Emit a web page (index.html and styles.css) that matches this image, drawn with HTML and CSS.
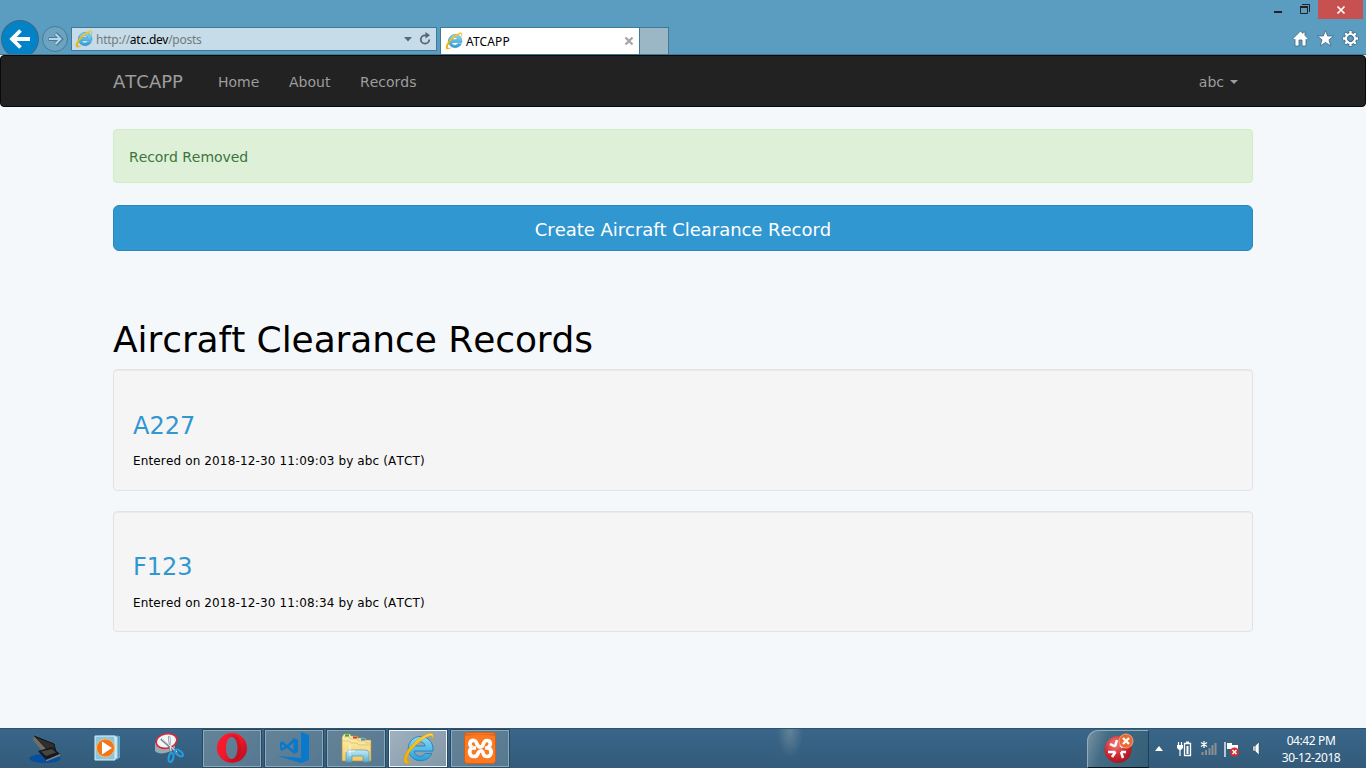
FILE: index.html
```html
<!DOCTYPE html>
<html lang="en">
<head>
<meta charset="utf-8">
<title>ATCAPP</title>
<link rel="stylesheet" href="styles.css">
</head>
<body>
<svg class="defs" width="0" height="0" aria-hidden="true">
  <defs>
    <linearGradient id="ieBlue" x1="0" y1="0" x2="0" y2="1"><stop offset="0" stop-color="#8adcf8"/><stop offset="1" stop-color="#279fda"/></linearGradient>
    <linearGradient id="ieGold" x1="0" y1="0" x2="1" y2="0"><stop offset="0" stop-color="#f3b300"/><stop offset="1" stop-color="#ffdb48"/></linearGradient>
    <radialGradient id="redBall" cx=".4" cy=".3" r=".7"><stop offset="0" stop-color="#f08080"/><stop offset=".6" stop-color="#cf2b32"/><stop offset="1" stop-color="#a81820"/></radialGradient>
    <linearGradient id="operaRed" x1="0" y1="0" x2="1" y2="1"><stop offset="0" stop-color="#ff1b2d"/><stop offset=".5" stop-color="#f0182a"/><stop offset="1" stop-color="#b00c1c"/></linearGradient>
    <linearGradient id="folder" x1="0" y1="0" x2="0" y2="1"><stop offset="0" stop-color="#fff3b8"/><stop offset="1" stop-color="#eecb66"/></linearGradient>
    <linearGradient id="glass" x1="0" y1="0" x2="0" y2="1"><stop offset="0" stop-color="#c4ecf8"/><stop offset="1" stop-color="#58add3"/></linearGradient>
    <symbol id="ie" viewBox="0 0 32 32">
      <path d="M29 20.800A12 11.800 0 1 1 30 15.500V18.500H11.800C12.400 24 19.800 25.400 22.400 20.800ZM11.900 13.600H22.400C21.800 8.400 13 7.800 11.900 13.600Z" fill="url(#ieBlue)" stroke="#2483b9" stroke-width=".9"/>
      <path d="M22.800 5.600C28 2.800 29.400 3.200 29.400 5.600C29.600 7 29 8.400 28.600 9.400C32.200 1.800 29.800-.2 24.400 2C15 5.400 4.600 16 2.200 24.600C.4 31.400 4.600 32 10.400 28.200C6 30 4 28.800 5.200 24.400C7.200 17.800 15.600 9.800 22.800 5.600Z" fill="url(#ieGold)" stroke="#d69a05" stroke-width=".5"/>
    </symbol>
  </defs>
</svg>
<div class="screen">
  <header class="browser">
    <div class="titlebar">
      <span class="win-min"></span>
      <svg class="win-restore" width="12" height="12" viewBox="0 0 12 12"><path d="M3 1.500H10.500V9" fill="none" stroke="#222"/><path d="M1.500 4V10.500H8.500V4" fill="none" stroke="#222"/><path d="M1 4H9" stroke="#222" stroke-width="2"/></svg>
      <span class="win-close"><svg width="10" height="10" viewBox="0 0 10 10"><path d="M1.500 1.500L8.500 8.500M8.500 1.500L1.500 8.500" stroke="#fff" stroke-width="1.700"/></svg></span>
    </div>
    <div class="toolbar">
      <svg class="back" width="40" height="35" viewBox="0 0 40 35"><circle cx="20" cy="20" r="18.400" fill="#0283c8" stroke="#386b89" stroke-width="1.200"/><path d="M30 20H12M20.500 11.500L12 20L20.500 28.500" fill="none" stroke="#fff" stroke-width="3.800"/></svg>
      <svg class="forward" width="28" height="28" viewBox="0 0 28 28"><circle cx="14" cy="14" r="12.500" fill="#6ca3c1" stroke="#437b9b"/><path d="M7.500 14H20M14.500 8.500L20 14L14.500 19.500" fill="none" stroke="#427b9c" stroke-width="4"/><path d="M8 14H19M14.500 9L19.500 14L14.500 19" fill="none" stroke="#b9d5e4" stroke-width="2"/></svg>
      <div class="address">
        <svg width="18" height="18"><use href="#ie"/></svg>
        <span class="url">http://<b>atc.dev</b>/posts</span>
        <svg class="drop" width="8" height="5" viewBox="0 0 8 5"><path d="M0 0H8L4 4.500Z" fill="#526e7d"/></svg>
        <svg width="12" height="14" viewBox="0 0 12 14"><path d="M7.500 3.300H6A4.200 4.200 0 1 0 10.200 7.500" fill="none" stroke="#59656c" stroke-width="1.800"/><path d="M6.500 0L11 3.300L6.500 6.500Z" fill="#59656c"/></svg>
      </div>
      <div class="tab"><svg width="18" height="18"><use href="#ie"/></svg><span>ATCAPP</span><svg class="tab-x" width="10" height="10" viewBox="0 0 10 10"><path d="M1.500 1.500L8.500 8.500M8.500 1.500L1.500 8.500" stroke="#a5a5a5" stroke-width="2.300"/></svg></div>
      <div class="newtab"></div>
      <div class="tools">
        <svg width="17" height="17" viewBox="0 0 17 17"><path d="M1 8.500L8.500 1L11 3.400V2H13V5.400L16 8.500L14.500 10L14 9.500V16H10V10H7V16H3V9.500L2.500 10Z" fill="#fff" stroke="#3c6680" stroke-width=".8"/></svg>
        <svg width="17" height="17" viewBox="0 0 17 17"><path d="M8.500 .5L10.700 6H16.700L12 9.800L13.800 16L8.500 12.400L3.200 16L5 9.800L.3 6H6.300Z" fill="#fff" stroke="#3c6680" stroke-width=".8"/></svg>
        <svg width="17" height="17" viewBox="0 0 17 17"><g fill="none"><path d="M8.500 .5V16.500M.5 8.500H16.500M2.800 2.800L14.200 14.200M14.200 2.800L2.800 14.200" stroke="#3c6680" stroke-width="3.600"/><circle cx="8.500" cy="8.500" r="4.600" stroke="#3c6680" stroke-width="3.600"/><path d="M8.500 1V5M8.500 12V16M1 8.500H5M12 8.500H16M3.200 3.200L6 6M11 11L13.800 13.800M13.800 3.200L11 6M6 11L3.200 13.800" stroke="#fff" stroke-width="2.300"/><circle cx="8.500" cy="8.500" r="4.500" stroke="#fff" stroke-width="2.200"/></g><circle cx="8.500" cy="8.500" r="2.800" fill="#5b9dc0" stroke="#3c6680" stroke-width=".6"/></svg>
      </div>
    </div>
  </header>

  <nav class="navbar">
    <a class="brand">ATCAPP</a>
    <a class="nav-link home">Home</a><a class="nav-link about">About</a><a class="nav-link records">Records</a>
    <a class="user">abc<i class="caret"></i></a>
  </nav>
  <main class="container">
    <div class="alert"><span>Record Removed</span></div>
    <a class="create"><span>Create Aircraft Clearance Record</span></a>
    <h1>Aircraft Clearance Records</h1>
    <section class="well"><h3>A227</h3><small>Entered on 2018-12-30 11:09:03 by abc (ATCT)</small></section>
    <section class="well second"><h3>F123</h3><small>Entered on 2018-12-30 11:08:34 by abc (ATCT)</small></section>
  </main>

  <footer class="taskbar">
    <div class="launchers">
      <svg width="32" height="32" viewBox="0 0 32 32"><ellipse cx="16" cy="26.500" rx="15.500" ry="4.500" fill="#074f9d"/><path d="M5 4L25 12L27 20L17 17Z" fill="#302f2e" stroke="#101214"/><path d="M5 4L17 17L14 20L4 8Z" fill="#746e67"/><path d="M9 19L23 15L31 22L17 28Z" fill="#171a1d"/><path d="M12 19.500L23 17L27 20.500L17 24Z" fill="#484642"/><path d="M17 28L31 22V24L17 29.500Z" fill="#7b8082"/></svg>
      <svg width="32" height="32" viewBox="0 0 32 32"><path d="M11 4H29V26H11Z" fill="#62a7c9"/><path d="M8 4H27V27H8Z" fill="#c2e4f1" stroke="#4f95b7"/><path d="M4 4H24V28H4Z" fill="#8bc5df" stroke="#d9f1f8"/><circle cx="14.500" cy="16" r="9" fill="#ee771c" stroke="#ffbb62"/><path d="M11 9.500L21 16L11 22.500Z" fill="#fff"/></svg>
      <svg width="32" height="32" viewBox="0 0 32 32"><path d="M2 11V19C5 23 16 22 22 16V10Z" fill="#98a9b3"/><ellipse cx="13.500" cy="9" rx="10.500" ry="7.200" transform="rotate(-12 13.500 9)" fill="#f3f6f8" stroke="#dc2834" stroke-width="1.600"/><path d="M8 7L25 22M16 4L18 22" stroke="#77838b" stroke-width="2.200"/><path d="M9 7L24 20M16 4L18 19" stroke="#eaf0f3"/><g fill="none" stroke="#249ee2" stroke-width="2"><ellipse cx="18" cy="25.500" rx="2.300" ry="4.500" transform="rotate(12 18 25.500)"/><ellipse cx="26" cy="21" rx="2.300" ry="4.500" transform="rotate(-55 26 21)"/></g></svg>
    </div>
    <div class="tasks">
      <div class="task"><svg width="32" height="32" viewBox="0 0 32 32"><path fill-rule="evenodd" d="M16 1A15 15 0 1 0 16 31A15 15 0 1 0 16 1ZM16 5C20 5 21.500 10 21.500 16S20 27 16 27S10 22 10 16S12 5 16 5Z" fill="url(#operaRed)"/><path d="M11 5C18 0 25 4 25 16S18 32 11 27C18 30 21.500 22 21.500 16S18 2 11 5Z" fill="#a70b18" opacity=".35"/></svg></div>
      <div class="task"><svg width="34" height="34" viewBox="0 0 34 34"><path d="M24 1L32 4V29L24 32L1 25L24 27Z" fill="#0879cb"/><path fill-rule="evenodd" d="M17 7L21 9V21L17 23L10 17L5 20L3 18V12L5 10L10 14ZM16.500 11.500L12 15.500L16.500 19.500ZM5 13V17.500L7.500 15.300Z" fill="#0879cb"/></svg></div>
      <div class="task"><svg width="34" height="34" viewBox="0 0 34 34"><path d="M3 6L5 3H11L12 5H18L19 7H26L27 9H32V30H3Z" fill="url(#folder)" stroke="#b59139" stroke-width=".7"/><path d="M5 6H11V8H19V10H27V12H31M3 10H10L12 12H18L20 14H32" fill="none" stroke="#d5b963" stroke-width=".7"/><path d="M6 4.500H10" stroke="#17b53a" stroke-width="2"/><path d="M14 6.500H18" stroke="#d63d28" stroke-width="2"/><path d="M22 8.500H26" stroke="#2895dc" stroke-width="2"/><path d="M7 31V22Q7 19 11 19H26Q30 19 30 22V31H24V25H13V31Z" fill="url(#glass)" stroke="#6197ad" stroke-width=".7"/><path d="M11 14V25M6 20H16" stroke="#fff" stroke-width=".7"/></svg></div>
      <div class="task active"><svg width="33" height="33"><use href="#ie"/></svg></div>
      <div class="task"><svg width="34" height="34" viewBox="0 0 34 34"><rect x="1.500" y="1.500" width="31" height="31" rx="3" fill="#fa7922" stroke="#d35e16"/><path d="M2 5Q17 2 32 5V3H2Z" fill="#c65d24" opacity=".6"/><path d="M13 17H10M9.500 16.500C5 14 7 9 11 9.500C15 10 12.500 16 17.500 16C21.500 16 19 9.500 24 9.500C28 9.500 28.500 14 25 16.500C30 19 28.500 25.500 24 25.500C18.500 25.500 21.500 19.500 17.500 20C13.500 20.500 16.500 25.500 11 25.500C6 25.500 5 19 9.500 16.500M25 17H22" fill="none" stroke="#fff" stroke-width="3.700"/></svg></div>
    </div>
    <div class="tray-app"><svg width="32" height="32" viewBox="0 0 32 32"><circle cx="15" cy="17.500" r="13.500" fill="url(#redBall)"/><path d="M7 12L12 14.500M14 8L12 14.500M18 15L23 13M18 20L23 20M18 20L20 26M12.500 20L9 25M12.500 20L5 20M18 15V10" fill="none" stroke="#fff" stroke-width="2.500"/><circle cx="23" cy="9" r="7" fill="#e96a31" stroke="#f5a07e"/><path d="M20 6L26 12M26 6L20 12" stroke="#fff" stroke-width="2.300"/></svg></div>
    <div class="tray">
      <svg width="8" height="5" viewBox="0 0 8 5"><path d="M0 5L4 0L8 5Z" fill="#fff"/></svg>
      <svg class="battery" width="17" height="18" viewBox="0 0 17 18"><path d="M2.500 2V5M5.500 2V5M4 9V16" fill="none" stroke="#fff" stroke-width="1.200"/><path d="M1 5H7V8L5 10H3L1 8Z" fill="#fff"/><path d="M8.500 3.500H14.500V15.500H8.500Z" fill="none" stroke="#fff" stroke-width="1.300"/><path d="M10.500 6H12.500V14H10.500ZM10 1.500H13V3H10Z" fill="#fff"/></svg>
      <svg class="signal" width="17" height="17" viewBox="0 0 17 17"><path d="M4 1V8M1 2.500L7 6.500M7 2.500L1 6.500" stroke="#fff" stroke-width="1.200"/><path d="M2.500 12V15M6 10V15M9.500 8V15M12.500 5V15M15.500 3V15" stroke="#8c9090" stroke-width="2"/></svg>
      <svg class="flag" width="18" height="18" viewBox="0 0 18 18"><path d="M2 2V17" stroke="#fff" stroke-width="1.300"/><path d="M4 3H9V5H15V11H9V9H4Z" fill="#fff"/><circle cx="11.500" cy="12" r="4.500" fill="#d52f2d"/><path d="M9.500 10L13.500 14M13.500 10L9.500 14" stroke="#fff" stroke-width="1.500"/></svg>
      <svg class="speaker" width="8" height="15" viewBox="0 0 8 15"><path d="M1 5H3L7 1V14L3 10H1Z" fill="#fff" stroke="#2b4050" stroke-width=".5"/><path d="M3 5V10" stroke="#6d8797"/></svg>
    </div>
    <div class="clock"><span>04:42 PM</span><span>30-12-2018</span></div>
  </footer>
</div>
</body>
</html>
```
FILE: styles.css
```css
* { box-sizing: border-box; }
body { margin: 0; font-family: "DejaVu Sans", sans-serif; font-kerning: none; color: #000; background: #f5f8fa; }
.defs { position: absolute; }
.screen { width: 1366px; height: 768px; display: flex; flex-direction: column; overflow: hidden; }
svg { display: block; flex: none; }
.browser { height: 55px; flex: none; background: #5b9dc0; border-bottom: 1px solid #407996; }
.titlebar { height: 19px; display: flex; justify-content: flex-end; align-items: flex-start; }
.win-min { width: 8px; height: 2px; margin: 11px 17px 0 0; background: #222; }
.win-restore { margin: 3px 7px 0 0; }
.win-close { width: 45px; height: 19px; margin-right: 3px; background: #c75050; display: flex; align-items: center; justify-content: center; }
.toolbar { height: 35px; display: flex; align-items: flex-end; font: 12px "Noto Sans", sans-serif; letter-spacing: -.25px; }
.forward { margin: 0 2px 1px 1px; }
.address { width: 366px; height: 24px; margin: 0 3px 3px 0; border: 1px solid #407996; background: #c6dce8; padding: 0 5px 0 3px; display: flex; align-items: center; }
.url { color: #707b81; margin: 1px 0 0 3px; }
.url b { font-weight: 400; color: #000; }
.drop { margin: 0 7px 0 auto; }
.tab { width: 200px; height: 27px; background: #fff; border: 1px solid #407996; border-bottom: 0; display: flex; align-items: center; padding: 0 5px 0 4px; }
.tab span { margin: 1px 0 0 3px; letter-spacing: .15px; }
.tab-x { margin-left: auto; }
.newtab { width: 29px; height: 27px; background: #9bb6c4; border: 1px solid #407996; border-width: 1px 1px 0 0; }
.tools { display: flex; gap: 8px; margin: 0 7px 7px auto; }
.navbar { height: 52px; flex: none; background: #222; border: 1px solid #090909; border-radius: 4px; padding: 2px 127px 0 112px; display: flex; align-items: center; color: #9d9d9d; font-size: 14px; }
.brand { width: 105px; font-size: 18px; padding-bottom: 1px; }
.home { width: 71px; }
.about { width: 71px; }
.user { margin-left: auto; display: flex; align-items: center; gap: 6px; }
.caret { border: 4px solid transparent; border-top-color: #9d9d9d; border-bottom: 0; }
.container { width: 1140px; margin: 22px auto 0; flex: 1; }
.alert { height: 54px; border: 1px solid #d6e9c6; border-radius: 4px; background: #dff0d8; color: #3c763d; padding: 2px 15px 0; display: flex; align-items: center; font-size: 14px; letter-spacing: -.07px; }
.create { height: 46px; margin-top: 22px; border: 1px solid #2a88bd; border-radius: 6px; background: #3097d1; color: #fff; display: flex; align-items: center; justify-content: center; font-size: 18px; letter-spacing: -.04px; padding-top: 3px; }
h1 { margin: 66px 0 10px; height: 42px; line-height: 46px; font-weight: 400; font-size: 36px; letter-spacing: -.08px; white-space: nowrap; }
.well { height: 122px; margin-bottom: 20px; padding: 41px 19px 0; background: #f5f5f5; border: 1px solid #e3e3e3; border-radius: 4px; box-shadow: inset 0 1px 1px rgba(0,0,0,.05); }
.second { height: 121px; padding-top: 40px; }
h3 { margin: 0 0 11px; font-size: 24px; line-height: 30px; font-weight: 400; color: #3097d1; }
small { display: block; font-size: 12px; line-height: 18px; letter-spacing: .14px; }
.second small { margin-top: 12px; }
.taskbar { height: 40px; flex: none; display: flex; align-items: center; border-top: 1px solid #2e536d; background: radial-gradient(ellipse 13px 27px at 757px 2px, rgba(120,145,157,.65), transparent), linear-gradient(#38668a, #345b79); background: radial-gradient(ellipse 13px 27px at 757px 2px, rgba(120,145,157,.65), transparent), linear-gradient(#38668a, #345b79); background-position: 33px 0, 0 0; }
.launchers { width: 202px; padding-left: 29px; display: flex; gap: 30px; margin-top: -2px; }
.tasks { display: flex; gap: 2px; }
.task { width: 60px; height: 39px; padding-bottom: 1px; display: flex; align-items: center; justify-content: center; border: 1px solid #264a62; background: linear-gradient(135deg, #648398, #557891); box-shadow: inset 0 0 0 1px #8ea8b7; }
.active { background: linear-gradient(135deg, #a1b1bf, #8197a8); box-shadow: inset 0 0 0 1px #eef4f8; }
.tray-app { width: 62px; height: 38px; margin-left: 577px; border: 1px solid #94abb9; border-right-color: #203e54; border-bottom-color: #0b1720; border-radius: 11px 0 0 0; background: linear-gradient(110deg, #7791a1, #426b84 30%, #355e79); display: flex; align-items: center; justify-content: center; padding: 0 0 2px 2px; }
.tray { display: flex; align-items: center; margin-left: 6px; }
.battery { margin-left: 13px; }
.signal { margin-left: 7px; }
.flag { margin-left: 6px; }
.speaker { margin-left: 11px; }
.clock { width: 62px; margin: 1px 24px 0 auto; display: flex; flex-direction: column; align-items: center; color: #fff; font: 12px/17px "Noto Sans", sans-serif; letter-spacing: -.4px; white-space: nowrap; }
```
